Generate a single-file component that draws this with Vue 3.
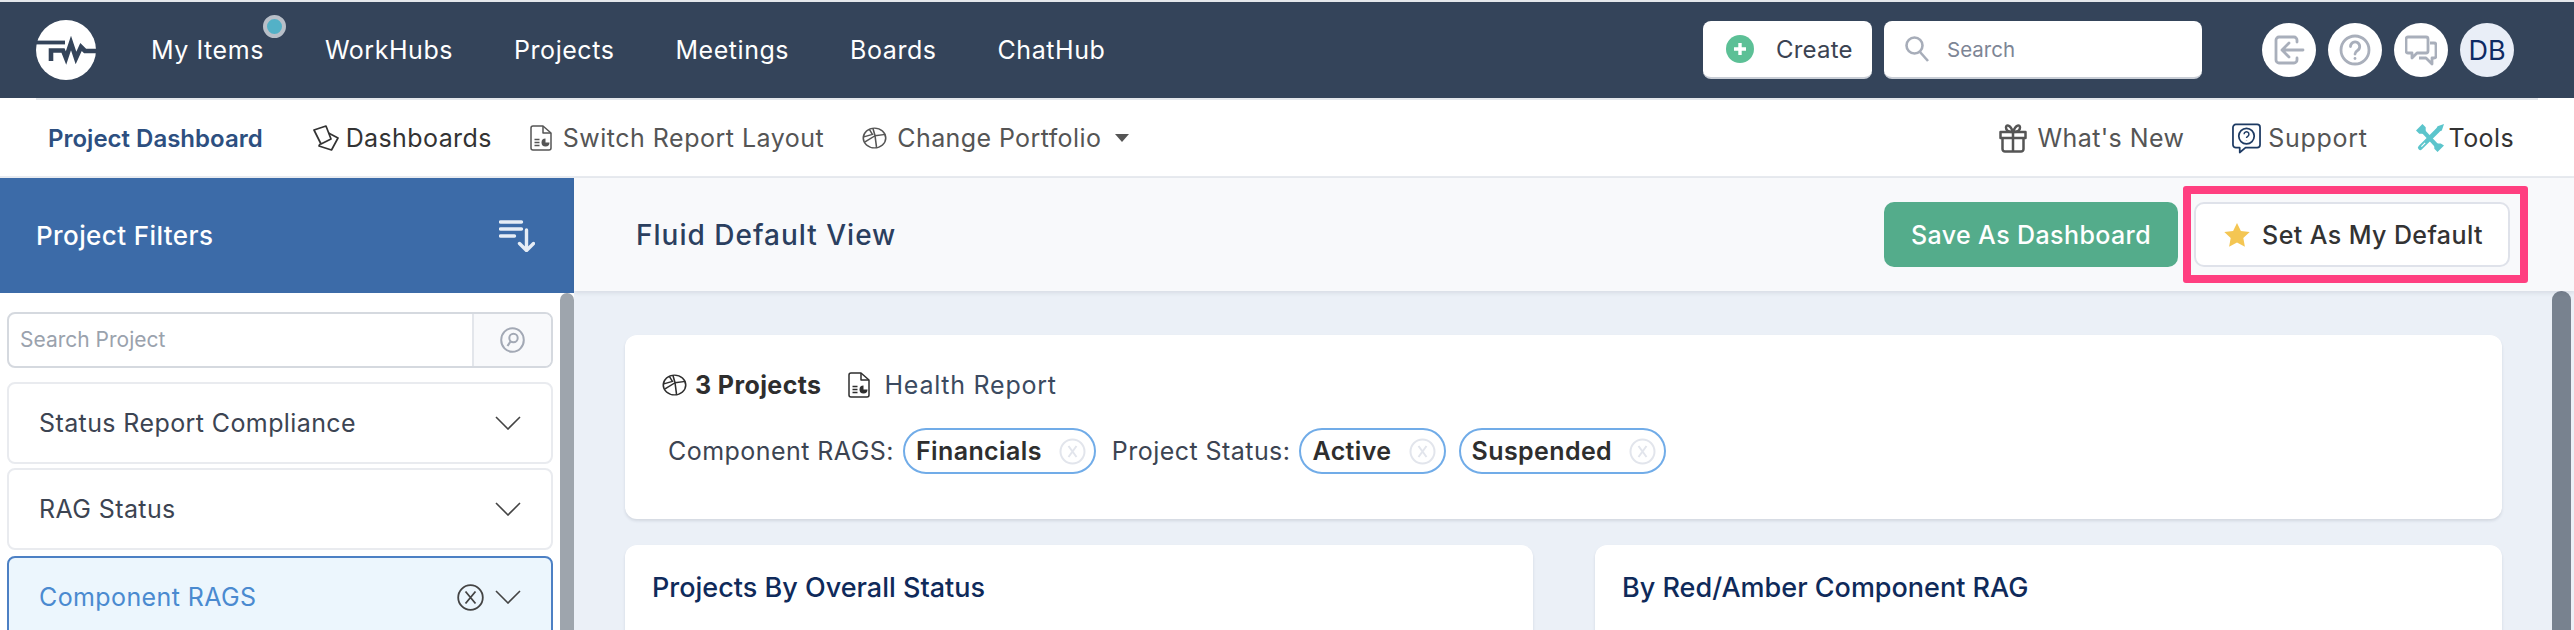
<script setup>
const navItems = ['My Items', 'WorkHubs', 'Projects', 'Meetings', 'Boards', 'ChatHub']
const chips = [
  { label: 'Component RAGS:', values: ['Financials'] },
  { label: 'Project Status:', values: ['Active', 'Suspended'] },
]
</script>

<template>
  <div class="page">
    <header class="topbar">
      <svg class="logo" viewBox="0 0 60 60">
        <circle cx="30" cy="30" r="30" fill="#fff" />
        <path d="M0 22.500H29" stroke="#34445a" stroke-width="3.800" fill="none" />
        <path d="M15 41V30.500H27L30 38L35 23L40 38L45 27L49 31H60" stroke="#34445a" stroke-width="4.600" fill="none" />
      </svg>
      <nav class="mainnav">
        <a v-for="item in navItems" :key="item" class="navlink">
          {{ item }}
          <span v-if="item === 'My Items'" class="badge"></span>
        </a>
      </nav>
      <button class="create">
        <svg class="plus" viewBox="0 0 28 28">
          <circle cx="14" cy="14" r="14" fill="#5cc096" />
          <path d="M14 8v12M8 14h12" stroke="#fff" stroke-width="3.400" />
        </svg>
        Create
      </button>
      <div class="topsearch">
        <svg class="mag" viewBox="0 0 26 28" fill="none" stroke="#a7adb9" stroke-width="2.600">
          <circle cx="10.500" cy="10.500" r="8" />
          <path d="M16 17l8 9" />
        </svg>
        <span>Search</span>
      </div>
      <div class="rounds">
        <span class="round">
          <svg viewBox="0 0 32 32" fill="none" stroke="#a9afbb" stroke-width="2.800" stroke-linecap="round" stroke-linejoin="round">
            <path d="M24 8V6a3 3 0 0 0-3-3H6a3 3 0 0 0-3 3v20a3 3 0 0 0 3 3h15a3 3 0 0 0 3-3v-2" />
            <path d="M30 16H10M16 9l-7 7 7 7" />
          </svg>
        </span>
        <span class="round">
          <svg viewBox="0 0 32 32" fill="none" stroke="#a9afbb" stroke-width="2.800" stroke-linecap="round">
            <circle cx="16" cy="16" r="14" />
            <path d="M11.500 12.500a4.600 4.600 0 1 1 7 4c-1.600 1-2.500 1.800-2.500 3.500" />
            <path d="M16 24.400v.2" />
          </svg>
        </span>
        <span class="round">
          <svg viewBox="0 0 32 32" fill="none" stroke="#a9afbb" stroke-width="2.800" stroke-linejoin="round">
            <path d="M3 3h18a2 2 0 0 1 2 2v12a2 2 0 0 1-2 2H12l-5 5v-5H3a2 2 0 0 1-2-2V5a2 2 0 0 1 2-2z" />
            <path d="M25 9h4a2 2 0 0 1 2 2v11a2 2 0 0 1-2 2h-2v6l-6-6h-7" />
          </svg>
        </span>
        <span class="round initials">DB</span>
      </div>
    </header>
    <div class="rule"></div>

    <div class="subnav">
      <a class="crumb">Project Dashboard</a>
      <a class="sublink dark tight">
        <svg class="i-dash" viewBox="0 0 26 26" fill="none" stroke="#333" stroke-width="1.700" stroke-linejoin="round">
          <path d="M1 5L13 1l5 13-10 5z" />
          <path d="M15.500 8L25 13l-6.500 12L6 21l1-2" />
        </svg>
        Dashboards
      </a>
      <a class="sublink wide">
        <svg class="i-doc" viewBox="0 0 22 26" fill="none" stroke="#555" stroke-width="1.500" stroke-linejoin="round">
          <path d="M3 1h10l8 7v15a2 2 0 0 1-2 2H3a2 2 0 0 1-2-2V3a2 2 0 0 1 2-2z" />
          <path d="M13 1v7h8" />
          <path d="M4.500 14.500h5M4.500 17.500h5M4.500 20.500h5" />
          <path d="M15.500 13.500v4h4a4 4 0 1 1-4-4z" fill="#555" stroke="none" />
        </svg>
        Switch Report Layout
      </a>
      <a class="sublink">
        <svg class="i-pie" viewBox="0 0 24 24" preserveAspectRatio="none" fill="none" stroke="#555" stroke-width="1.500">
          <circle cx="12" cy="12" r="10.800" />
          <path d="M7 2.500L10 8L1.800 10.800M12.500 9.500L10.500 1.500M12.500 9.500L22.500 8M12.500 9.500L14 22.500M12.500 9.500L2.500 16.500" />
        </svg>
        Change Portfolio
        <span class="caret"></span>
      </a>
      <div class="subright">
        <a class="sublink">
          <svg class="i-gift" viewBox="0 0 28 30" fill="none" stroke="#555" stroke-width="2.500" stroke-linejoin="round">
            <path d="M1.500 9h25v6h-25zM3.500 15v11a2.500 2.500 0 0 0 2.500 2.500h16a2.500 2.500 0 0 0 2.500-2.500V15M14 9v19.500" />
            <path d="M14 9C10 9 7 7.500 7 4.500S11 1 14 9zM14 9c4 0 7-1.500 7-4.500S17 1 14 9z" />
          </svg>
          What's New
        </a>
        <a class="sublink support">
          <svg class="i-support" viewBox="0 0 30 32" fill="none" stroke="#1d3a63" stroke-width="1.800" stroke-linejoin="round">
            <path d="M4 1.500h22a3 3 0 0 1 3 3v18a3 3 0 0 1-3 3H14l-6 5v-5H4a3 3 0 0 1-3-3v-18a3 3 0 0 1 3-3z" />
            <circle cx="15" cy="13.500" r="8" />
            <path d="M12.500 11.500a2.500 2.500 0 1 1 3.800 2.200c-.8.500-1.300.9-1.300 1.800M15 17.500v.4" stroke-width="1.500" />
          </svg>
          Support
        </a>
        <a class="sublink dark">
          <svg class="i-tools" viewBox="0 0 26 26" fill="none" stroke="#5cc5cc" stroke-linejoin="round">
            <path d="M5 5L21 22" stroke-width="4" />
            <path d="M0 6l6-6 3 3v4L7 9H3zM26 20l-6 6-3-3v-3l2-2h4z" fill="#5cc5cc" stroke="none" />
            <path d="M20 6L4 22" stroke-width="4.400" stroke-linecap="round" />
            <path d="M26 0l-6 2-2 4 2 2 4-2z" fill="#5cc5cc" stroke="none" />
            <path d="M8.500 17.500L5 21" stroke="#fff" stroke-width="1" />
          </svg>
          Tools
        </a>
      </div>
    </div>

    <div class="workspace">
      <aside class="sidebar">
        <div class="sidehead">
          <span>Project Filters</span>
          <svg class="sorticon" viewBox="0 0 36 32" fill="none" stroke="#e6edf6" stroke-width="3.400" stroke-linecap="round" stroke-linejoin="round">
            <path d="M1.500 2h21M1.500 9h21M1.500 16h14" />
            <path d="M27.500 10v20M20.500 23.500l7 7 7-7" />
          </svg>
        </div>
        <div class="sidebody">
          <div class="filtersearch">
            <span class="placeholder">Search Project</span>
            <span class="searchbtn">
              <svg viewBox="0 0 25 26" fill="none" stroke="#a3a9b5" stroke-width="2">
                <ellipse cx="12.500" cy="13" rx="11.300" ry="11.800" />
                <circle cx="13.500" cy="11" r="4.200" />
                <path d="M10.500 14.500L7.500 19" stroke-width="2.200" />
              </svg>
            </span>
          </div>
          <div class="filter">
            <span>Status Report Compliance</span>
            <svg class="chev" viewBox="0 0 26 14" fill="none" stroke="#444" stroke-width="1.600"><path d="M1 1l12 12L25 1" /></svg>
          </div>
          <div class="filter">
            <span>RAG Status</span>
            <svg class="chev" viewBox="0 0 26 14" fill="none" stroke="#444" stroke-width="1.600"><path d="M1 1l12 12L25 1" /></svg>
          </div>
          <div class="filter active">
            <span>Component RAGS</span>
            <svg class="clear" viewBox="0 0 27 27" fill="none" stroke="#444" stroke-width="1.800">
              <circle cx="13.500" cy="13.500" r="12.300" />
              <path d="M8.500 7.500l10 12M18.500 7.500l-10 12" />
            </svg>
            <svg class="chev" viewBox="0 0 26 14" fill="none" stroke="#444" stroke-width="1.600"><path d="M1 1l12 12L25 1" /></svg>
          </div>
          <span class="sidescroll"></span>
        </div>
      </aside>

      <main class="main">
        <div class="mainhead">
          <h1>Fluid Default View</h1>
          <button class="save">Save As Dashboard</button>
          <button class="default">
            <svg class="star" viewBox="0 0 26 24"><path d="M13 0l3.900 8 8.800 1.100-6.400 6 1.600 8.700L13 19.600l-7.900 4.200 1.600-8.700-6.400-6L9.100 8z" fill="#f4c653" /></svg>
            Set As My Default
          </button>
          <span class="highlight"></span>
        </div>
        <div class="mainbody">
          <section class="card summary">
            <div class="sumrow">
              <svg class="i-pie2" viewBox="0 0 24 24" preserveAspectRatio="none" fill="none" stroke="#2e2e2e" stroke-width="1.500">
                <circle cx="12" cy="12" r="10.800" />
                <path d="M7 2.500L10 8L1.800 10.800M12.500 9.500L10.500 1.500M12.500 9.500L22.500 8M12.500 9.500L14 22.500M12.500 9.500L2.500 16.500" />
              </svg>
              <strong>3 Projects</strong>
              <svg class="i-doc2" viewBox="0 0 22 26" fill="none" stroke="#2e2e2e" stroke-width="1.500" stroke-linejoin="round">
                <path d="M3 1h10l8 7v15a2 2 0 0 1-2 2H3a2 2 0 0 1-2-2V3a2 2 0 0 1 2-2z" />
                <path d="M13 1v7h8" />
                <path d="M4.500 14.500h5M4.500 17.500h5M4.500 20.500h5" />
                <path d="M15.500 13.500v4h4a4 4 0 1 1-4-4z" fill="#2e2e2e" stroke="none" />
              </svg>
              <span class="report">Health Report</span>
            </div>
            <div class="chiprow">
              <template v-for="group in chips" :key="group.label">
                <span class="chiplabel">{{ group.label }}</span>
                <span v-for="value in group.values" :key="value" class="chip">
                  {{ value }}
                  <svg viewBox="0 0 27 27" fill="none" stroke="#e2e5ec" stroke-width="2">
                    <circle cx="13.500" cy="13.500" r="12" />
                    <path d="M9.500 8l8 11M17.500 8l-8 11" />
                  </svg>
                </span>
              </template>
            </div>
          </section>
          <div class="cardgrid">
            <section class="card chart"><h2>Projects By Overall Status</h2></section>
            <section class="card chart"><h2>By Red/Amber Component RAG</h2></section>
          </div>
          <span class="mainscroll"></span>
        </div>
      </main>
    </div>
  </div>
</template>

<style>
html, body { margin: 0; background: #fff; }
</style>

<style scoped>
.page {
  width: 2574px;
  height: 630px;
  overflow: hidden;
  display: flex;
  flex-direction: column;
  font-family: Inter, "Liberation Sans", sans-serif;
  letter-spacing: 0.4px;
  background: #fff;
  border-top: 2px solid #e4e7eb;
  box-sizing: border-box;
}
.topbar {
  height: 96px;
  flex: none;
  display: flex;
  align-items: center;
  background: #34445a;
  padding-left: 36px;
  box-sizing: border-box;
}
.logo { width: 60px; height: 60px; flex: none; }
.mainnav {
  display: flex;
  gap: 61px;
  margin-left: 55px;
  width: 1497px;
  flex: none;
}
.navlink {
  position: relative;
  color: #fff;
  font-size: 25px;
  line-height: 32px;
  letter-spacing: 0.55px;
}
.badge {
  position: absolute;
  left: 112px;
  top: -19px;
  width: 15px;
  height: 15px;
  border-radius: 50%;
  border: 4px solid #b8bfc8;
  background: #53b1c7;
}
.create {
  width: 169px;
  height: 58px;
  flex: none;
  margin-left: 55px;
  display: flex;
  align-items: center;
  padding: 0 0 0 23px;
  gap: 22px;
  border: 0;
  border-bottom: 2px solid #c9ced6;
  border-radius: 8px;
  background: #fff;
  color: #3b4352;
  font: 400 24px Inter, sans-serif;
  letter-spacing: 0.2px;
  box-sizing: border-box;
}
.plus { width: 28px; height: 28px; }
.topsearch {
  width: 318px;
  height: 58px;
  flex: none;
  margin-left: 12px;
  display: flex;
  align-items: center;
  gap: 17px;
  padding-left: 20px;
  background: #fff;
  border-radius: 8px;
  border-bottom: 2px solid #c9ced6;
  color: #7d8595;
  font-size: 20.500px;
  letter-spacing: 0;
  box-sizing: border-box;
}
.mag { width: 26px; height: 28px; }
.rounds { display: flex; gap: 12px; margin-left: 60px; }
.round {
  width: 54px;
  height: 54px;
  border-radius: 50%;
  background: #fff;
  display: flex;
  align-items: center;
  justify-content: center;
}
.round svg { width: 32px; height: 32px; }
.initials {
  background: #e9eef7;
  color: #0e2a63;
  font-size: 27px;
  letter-spacing: 0;
}
.rule {
  height: 2px;
  flex: none;
  margin: 0 36px;
  background: #e4e7eb;
}
.subnav {
  height: 78px;
  flex: none;
  display: flex;
  align-items: center;
  padding-left: 48px;
  border-bottom: 2px solid #e8ebf0;
  box-sizing: border-box;
  font-size: 25px;
  color: #555;
}
.crumb {
  color: #2d4f80;
  font-weight: 600;
  font-size: 24px;
  letter-spacing: 0;
  margin-right: 50px;
  white-space: nowrap;
}
.sublink {
  display: flex;
  align-items: center;
  gap: 10px;
  margin-right: 38px;
  white-space: nowrap;
}
.tight { gap: 7px; }
.wide { gap: 11px; letter-spacing: 0.5px; }
.support { letter-spacing: 0.7px; }
.dark { color: #333; }
.i-dash { width: 26px; height: 26px; }
.i-doc { width: 22px; height: 26px; }
.i-pie { width: 25px; height: 22px; }
.caret {
  width: 0;
  height: 0;
  margin-left: 4px;
  border-left: 7px solid transparent;
  border-right: 7px solid transparent;
  border-top: 8px solid #555;
}
.subright {
  display: flex;
  align-items: center;
  margin-left: auto;
  padding-right: 60px;
}
.subright .sublink { margin-right: 48px; }
.subright .sublink:last-child { margin-right: 0; }
.i-gift { width: 28px; height: 30px; }
.i-support { width: 29px; height: 31px; margin-right: -3px; }
.i-tools { width: 28px; height: 28px; margin-right: -5px; }
.workspace { flex: 1; display: flex; min-height: 0; }
.sidebar {
  width: 574px;
  flex: none;
  display: flex;
  flex-direction: column;
}
.sidehead {
  height: 115px;
  flex: none;
  background: #3c6ba8;
  color: #fff;
  font-size: 26px;
  font-weight: 500;
  display: flex;
  align-items: center;
  justify-content: space-between;
  padding: 0 39px 0 36px;
  box-sizing: border-box;
}
.sorticon { width: 36px; height: 32px; }
.sidebody {
  position: relative;
  flex: 1;
  padding: 19px 21px 0 7px;
  display: flex;
  flex-direction: column;
}
.filtersearch {
  height: 56px;
  flex: none;
  display: flex;
  border: 2px solid #d5d9df;
  border-radius: 8px;
  box-sizing: border-box;
  overflow: hidden;
}
.placeholder {
  flex: 1;
  padding-left: 11px;
  font-size: 21px;
  letter-spacing: 0;
  line-height: 52px;
  color: #9aa2ad;
}
.searchbtn {
  width: 79px;
  background: #f8f9fb;
  border-left: 2px solid #e3e6eb;
  display: flex;
  align-items: center;
  justify-content: center;
  box-sizing: border-box;
}
.searchbtn svg { width: 25px; height: 26px; }
.filter {
  height: 82px;
  flex: none;
  margin-top: 4px;
  display: flex;
  align-items: center;
  padding: 0 30px 0 30px;
  border: 2px solid #e9ebef;
  border-radius: 8px;
  box-sizing: border-box;
  color: #3c4452;
  font-size: 25px;
}
.filtersearch + .filter { margin-top: 14px; }
.filter span { flex: 1; }
.chev { width: 26px; height: 14px; flex: none; }
.clear { width: 27px; height: 27px; margin-right: 11px; flex: none; }
.filter.active {
  margin-top: 6px;
  background: #ecf6fd;
  border-color: #4c80c4;
  color: #4a8ad0;
}
.sidescroll {
  position: absolute;
  top: 0;
  right: 0;
  bottom: 0;
  width: 14px;
  background: #9ea5ad;
  border-radius: 7px 7px 0 0;
}
.main {
  flex: 1;
  min-width: 0;
  display: flex;
  flex-direction: column;
  background: #ebf0f7;
}
.mainhead {
  position: relative;
  height: 113px;
  flex: none;
  display: flex;
  align-items: center;
  padding: 0 64px 0 62px;
  background: #f8f9fb;
  box-shadow: 0 2px 4px rgba(40, 50, 70, 0.1);
  box-sizing: border-box;
  z-index: 1;
}
h1 {
  flex: 1;
  margin: 0;
  color: #2b3f5f;
  font-size: 28px;
  font-weight: 500;
  letter-spacing: 1px;
}
.save, .default {
  height: 65px;
  border-radius: 10px;
  font: 500 25px Inter, sans-serif;
  letter-spacing: 0.4px;
  box-sizing: border-box;
}
.save {
  width: 294px;
  background: #54ac8b;
  border: 0;
  color: #fff;
  margin-right: 16px;
}
.default {
  width: 316px;
  display: flex;
  align-items: center;
  justify-content: center;
  gap: 12px;
  padding: 0 0 0 3px;
  background: #fff;
  border: 2px solid #dfe2ea;
  color: #333;
}
.star { width: 26px; height: 24px; }
.highlight {
  position: absolute;
  left: 1609px;
  top: 8px;
  width: 345px;
  height: 97px;
  border: 8px solid #ff3f80;
  border-radius: 3px;
  box-sizing: border-box;
}
.mainbody {
  position: relative;
  flex: 1;
  padding: 44px 72px 0 51px;
  display: flex;
  flex-direction: column;
  gap: 26px;
  min-height: 0;
}
.card {
  background: #fff;
  border-radius: 12px;
  box-shadow: 0 2px 3px rgba(40, 50, 70, 0.12);
  box-sizing: border-box;
}
.summary { height: 184px; flex: none; padding: 30px 37px 0; }
.sumrow {
  display: flex;
  align-items: center;
  height: 40px;
  font-size: 25px;
}
.i-pie2 { width: 25px; height: 22px; margin-right: 8px; }
.sumrow strong { color: #2e2e2e; font-weight: 700; }
.i-doc2 { width: 22px; height: 26px; margin-left: 26px; margin-right: 15px; }
.report { color: #3b4a60; letter-spacing: 0.75px; }
.chiprow {
  display: flex;
  align-items: center;
  margin-top: 23px;
  margin-left: 6px;
  font-size: 25px;
}
.chiplabel { color: #3c4452; margin-right: 9px; white-space: nowrap; letter-spacing: 0.45px; }
.chip + .chiplabel { margin-left: 3px; }
.chip {
  height: 46px;
  display: flex;
  align-items: center;
  justify-content: space-between;
  gap: 17px;
  padding: 0 8px 0 11px;
  margin-right: 13px;
  border: 2px solid #71ace8;
  border-radius: 23px;
  box-sizing: border-box;
  color: #2e2e2e;
  font-weight: 600;
  white-space: nowrap;
}
.chip svg { width: 27px; height: 27px; }
.cardgrid {
  display: grid;
  grid-template-columns: 908px 907px;
  gap: 62px;
  flex: 1;
}
.chart { height: 200px; padding: 26px 27px; }
h2 {
  margin: 0;
  color: #0f2a5a;
  font-size: 27px;
  font-weight: 500;
  letter-spacing: 0;
}
.mainscroll {
  position: absolute;
  top: 0;
  right: 3px;
  bottom: 0;
  width: 19px;
  background: #78828f;
  border-radius: 9px 9px 0 0;
}
</style>
